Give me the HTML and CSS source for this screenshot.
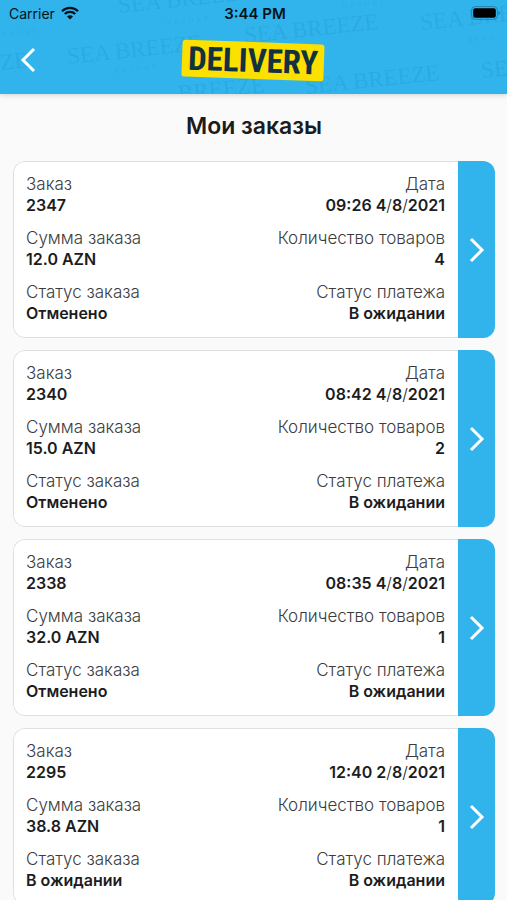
FILE: index.html
```html
<!DOCTYPE html>
<html lang="ru">
<head>
<meta charset="utf-8">
<meta name="viewport" content="width=device-width, initial-scale=1">
<title>Мои заказы</title>
<link rel="stylesheet" href="styles.css">
</head>
<body>
<header class="header">
  <svg class="watermark" width="507" height="94" viewBox="0 0 507 94" aria-hidden="true">
    <g class="watermark-name">
      <text transform="translate(119 13) rotate(-6)">SEA BREEZE</text>
      <text transform="translate(68 64) rotate(-6)">SEA BREEZE</text>
      <text transform="translate(245 43) rotate(-6)">SEA BREEZE</text>
      <text transform="translate(421 30) rotate(-6)">SEA BRE</text>
      <text transform="translate(1 70) rotate(-6)">ZE</text>
      <text transform="translate(179 101) rotate(-6)">BREEZE</text>
      <text transform="translate(306 94) rotate(-6)">SEA BREEZE</text>
      <text transform="translate(482 78) rotate(-6)">SE</text>
    </g>
    <g class="watermark-sub">
      <text transform="translate(167 25) rotate(-6)">RESORT</text>
      <text transform="translate(3 37) rotate(-6)">ESORT</text>
      <text transform="translate(115 73) rotate(-6)">RESORT</text>
      <text transform="translate(343 8) rotate(-6)">RESORT</text>
      <text transform="translate(468 42) rotate(-6)">RESO</text>
    </g>
  </svg>
  <div class="status">
    <div class="carrier">
      <span>Carrier</span>
      <svg width="18" height="14" viewBox="0 0 18 14" aria-hidden="true">
        <path d="M1 5.2a11.4 11.4 0 0 1 16 0M3.8 8a7.4 7.4 0 0 1 10.4 0" fill="none" stroke="#06121a" stroke-width="2.3"/>
        <path d="M9 13.6 6 10.6a4.3 4.3 0 0 1 6 0z" fill="#06121a"/>
      </svg>
    </div>
    <span class="clock">3:44 PM</span>
    <svg class="battery" width="30" height="14" viewBox="0 0 30 14" aria-hidden="true">
      <rect x=".6" y=".6" width="25.8" height="12.8" rx="3.6" fill="none" stroke="#2384ae" stroke-width="1"/>
      <rect x="2.2" y="2.2" width="22.6" height="9.6" rx="2" fill="#000"/>
      <path d="M27.5 4.8q1.8.8 1.8 2.2t-1.8 2.2z" fill="#2384ae"/>
    </svg>
  </div>
  <div class="nav">
    <button class="back" type="button" aria-label="Назад">
      <svg width="16" height="26" viewBox="0 0 16 26"><path d="M14 2 3 13l11 11" fill="none" stroke="#fff" stroke-width="3"/></svg>
    </button>
    <div class="logo">DELIVERY</div>
  </div>
</header>
<main class="content">
  <h1 class="title">Мои заказы</h1>
  <div class="orders">
    <article class="order">
      <dl class="details">
        <div class="field"><dt>Заказ</dt><dd>2347</dd></div>
        <div class="field"><dt>Дата</dt><dd>09:26 4<i>/</i>8<i>/</i>2021</dd></div>
        <div class="field"><dt>Сумма заказа</dt><dd>12.0 AZN</dd></div>
        <div class="field"><dt>Количество товаров</dt><dd>4</dd></div>
        <div class="field"><dt>Статус заказа</dt><dd>Отменено</dd></div>
        <div class="field"><dt>Статус платежа</dt><dd>В ожидании</dd></div>
      </dl>
      <button class="open" type="button" aria-label="Открыть заказ 2347">
        <svg width="16" height="26" viewBox="0 0 16 26"><path d="m2 2 11 11L2 24" fill="none" stroke="#fff" stroke-width="3"/></svg>
      </button>
    </article>
    <article class="order">
      <dl class="details">
        <div class="field"><dt>Заказ</dt><dd>2340</dd></div>
        <div class="field"><dt>Дата</dt><dd>08:42 4<i>/</i>8<i>/</i>2021</dd></div>
        <div class="field"><dt>Сумма заказа</dt><dd>15.0 AZN</dd></div>
        <div class="field"><dt>Количество товаров</dt><dd>2</dd></div>
        <div class="field"><dt>Статус заказа</dt><dd>Отменено</dd></div>
        <div class="field"><dt>Статус платежа</dt><dd>В ожидании</dd></div>
      </dl>
      <button class="open" type="button" aria-label="Открыть заказ 2340">
        <svg width="16" height="26" viewBox="0 0 16 26"><path d="m2 2 11 11L2 24" fill="none" stroke="#fff" stroke-width="3"/></svg>
      </button>
    </article>
    <article class="order">
      <dl class="details">
        <div class="field"><dt>Заказ</dt><dd>2338</dd></div>
        <div class="field"><dt>Дата</dt><dd>08:35 4<i>/</i>8<i>/</i>2021</dd></div>
        <div class="field"><dt>Сумма заказа</dt><dd>32.0 AZN</dd></div>
        <div class="field"><dt>Количество товаров</dt><dd>1</dd></div>
        <div class="field"><dt>Статус заказа</dt><dd>Отменено</dd></div>
        <div class="field"><dt>Статус платежа</dt><dd>В ожидании</dd></div>
      </dl>
      <button class="open" type="button" aria-label="Открыть заказ 2338">
        <svg width="16" height="26" viewBox="0 0 16 26"><path d="m2 2 11 11L2 24" fill="none" stroke="#fff" stroke-width="3"/></svg>
      </button>
    </article>
    <article class="order">
      <dl class="details">
        <div class="field"><dt>Заказ</dt><dd>2295</dd></div>
        <div class="field"><dt>Дата</dt><dd>12:40 2<i>/</i>8<i>/</i>2021</dd></div>
        <div class="field"><dt>Сумма заказа</dt><dd>38.8 AZN</dd></div>
        <div class="field"><dt>Количество товаров</dt><dd>1</dd></div>
        <div class="field"><dt>Статус заказа</dt><dd>В ожидании</dd></div>
        <div class="field"><dt>Статус платежа</dt><dd>В ожидании</dd></div>
      </dl>
      <button class="open" type="button" aria-label="Открыть заказ 2295">
        <svg width="16" height="26" viewBox="0 0 16 26"><path d="m2 2 11 11L2 24" fill="none" stroke="#fff" stroke-width="3"/></svg>
      </button>
    </article>
  </div>
</main>
</body>
</html>
```
FILE: styles.css
```css
* {
  box-sizing: border-box;
}

html {
  scrollbar-width: none;
}

body {
  margin: 0;
  background: #fafafa;
  color: #1c1c1e;
  font-family: Inter, "Liberation Sans", sans-serif;
}

.header {
  position: relative;
  background: #31b4ec;
  box-shadow: 0 1px 5px #d0d0d0;
}

.watermark {
  position: absolute;
  top: 0;
  left: 0;
}

.watermark text {
  fill: #1f97cc;
  fill-opacity: 0.32;
  font-family: "Liberation Serif", serif;
}

.watermark-name {
  font-size: 23px;
}

.watermark-sub {
  font-size: 7px;
  letter-spacing: 3px;
}

.status {
  position: relative;
  display: grid;
  grid-template-columns: 1fr auto 1fr;
  align-items: center;
  height: 26px;
  padding: 0 6px 0 9px;
  color: #06121a;
  font-size: 14px;
}

.carrier {
  display: flex;
  align-items: center;
  gap: 6px;
}

.clock {
  font-size: 15px;
  font-weight: 600;
}

.battery {
  justify-self: end;
}

.nav {
  position: relative;
  display: grid;
  grid-template-columns: 1fr auto 1fr;
  align-items: center;
  height: 68px;
  padding: 0 20px;
}

.back,
.open {
  display: flex;
  align-items: center;
  border: 0;
  cursor: pointer;
}

.back {
  justify-self: start;
  padding: 0;
  background: none;
}

.logo {
  padding: 0 6px;
  border-radius: 3px;
  background: #fbe000;
  color: #12323f;
  font: bold 33px/37px "Roboto Condensed", Roboto, sans-serif;
  transform: rotate(2deg);
}

.content {
  padding: 16px 12px 12px 13px;
}

.title {
  margin: 0 0 19px;
  font-size: 23px;
  line-height: 32px;
  font-weight: 600;
  text-align: center;
}

.orders {
  display: grid;
  gap: 12px;
}

.order {
  display: flex;
  border-radius: 12px;
  overflow: hidden;
}

.details {
  flex: 1;
  display: grid;
  grid-template-columns: auto auto;
  justify-content: space-between;
  row-gap: 13px;
  margin: 0;
  padding: 12px 13px 14px 12px;
  border: 1px solid #e0e0e0;
  border-right: 0;
  border-radius: 12px 0 0 12px;
  background: #fff;
}

.field:nth-child(even) {
  text-align: right;
}

.field dt {
  color: #3c3c3e;
  font-size: 17px;
  font-weight: 300;
  line-height: 21px;
}

.field dd {
  margin: 0;
  font-size: 16px;
  font-weight: 600;
  line-height: 20px;
}

.field i {
  font-style: normal;
  font-weight: 300;
}

.open {
  width: 37px;
  justify-content: center;
  padding: 0;
  background: #31b4ec;
}
```
